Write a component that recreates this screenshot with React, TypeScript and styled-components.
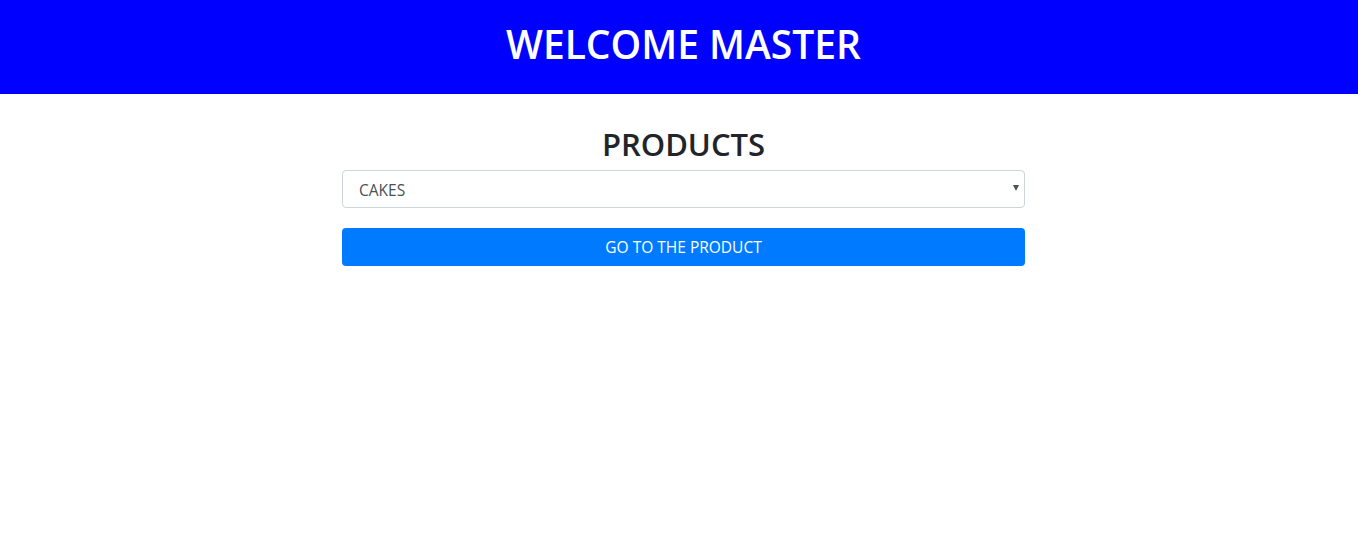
import React from "react";
import styled, { createGlobalStyle } from "styled-components";

const GlobalStyle = createGlobalStyle`
  html, body { margin: 0; padding: 0; background: #fff; }
  body { font-family: "Open Sans", "Noto Sans", sans-serif; color: #212529; }
  * { box-sizing: border-box; }
`;

const Header = styled.header`
  height: 94px;
  background: #0000ff;
  display: flex;
  align-items: center;
  justify-content: center;
  padding-bottom: 6px;
`;

const Title = styled.h1`
  margin: 0;
  color: #fff;
  font-size: 39px;
  font-weight: 600;
  line-height: 1.2;
  padding-left: 9px;
`;

const Main = styled.main`
  width: 683px;
  margin: 0 0 0 342px;
  display: flex;
  flex-direction: column;
  padding-top: 30px;
`;

const Heading = styled.h2`
  margin: 0 0 6px;
  text-align: center;
  font-size: 31px;
  font-weight: 600;
  line-height: 40px;
  color: #212529;
`;

const SelectWrap = styled.div`
  position: relative;
  height: 38px;
`;

const Select = styled.select`
  width: 100%;
  height: 38px;
  border: 1px solid #ced4da;
  border-radius: 4px;
  padding: 2px 12px 0 16px;
  font-family: inherit;
  font-size: 15.5px;
  color: #495057;
  background: #fff;
  appearance: none;
  outline: none;
`;

const Arrow = styled.span`
  position: absolute;
  right: 6px;
  top: 15px;
  width: 0;
  height: 0;
  border-left: 3.5px solid transparent;
  border-right: 3.5px solid transparent;
  border-top: 6px solid #495057;
  pointer-events: none;
`;

const Button = styled.button`
  margin-top: 20px;
  height: 38px;
  width: 100%;
  border: none;
  border-radius: 4px;
  background: #007bff;
  color: #fff;
  font-family: inherit;
  font-size: 15.5px;
  cursor: pointer;
`;

export default function App() {
  return (
    <>
      <GlobalStyle />
      <Header>
        <Title>WELCOME MASTER</Title>
      </Header>
      <Main>
        <Heading>PRODUCTS</Heading>
        <SelectWrap>
          <Select defaultValue="CAKES">
            <option value="CAKES">CAKES</option>
          </Select>
          <Arrow />
        </SelectWrap>
        <Button>GO TO THE PRODUCT</Button>
      </Main>
    </>
  );
}
